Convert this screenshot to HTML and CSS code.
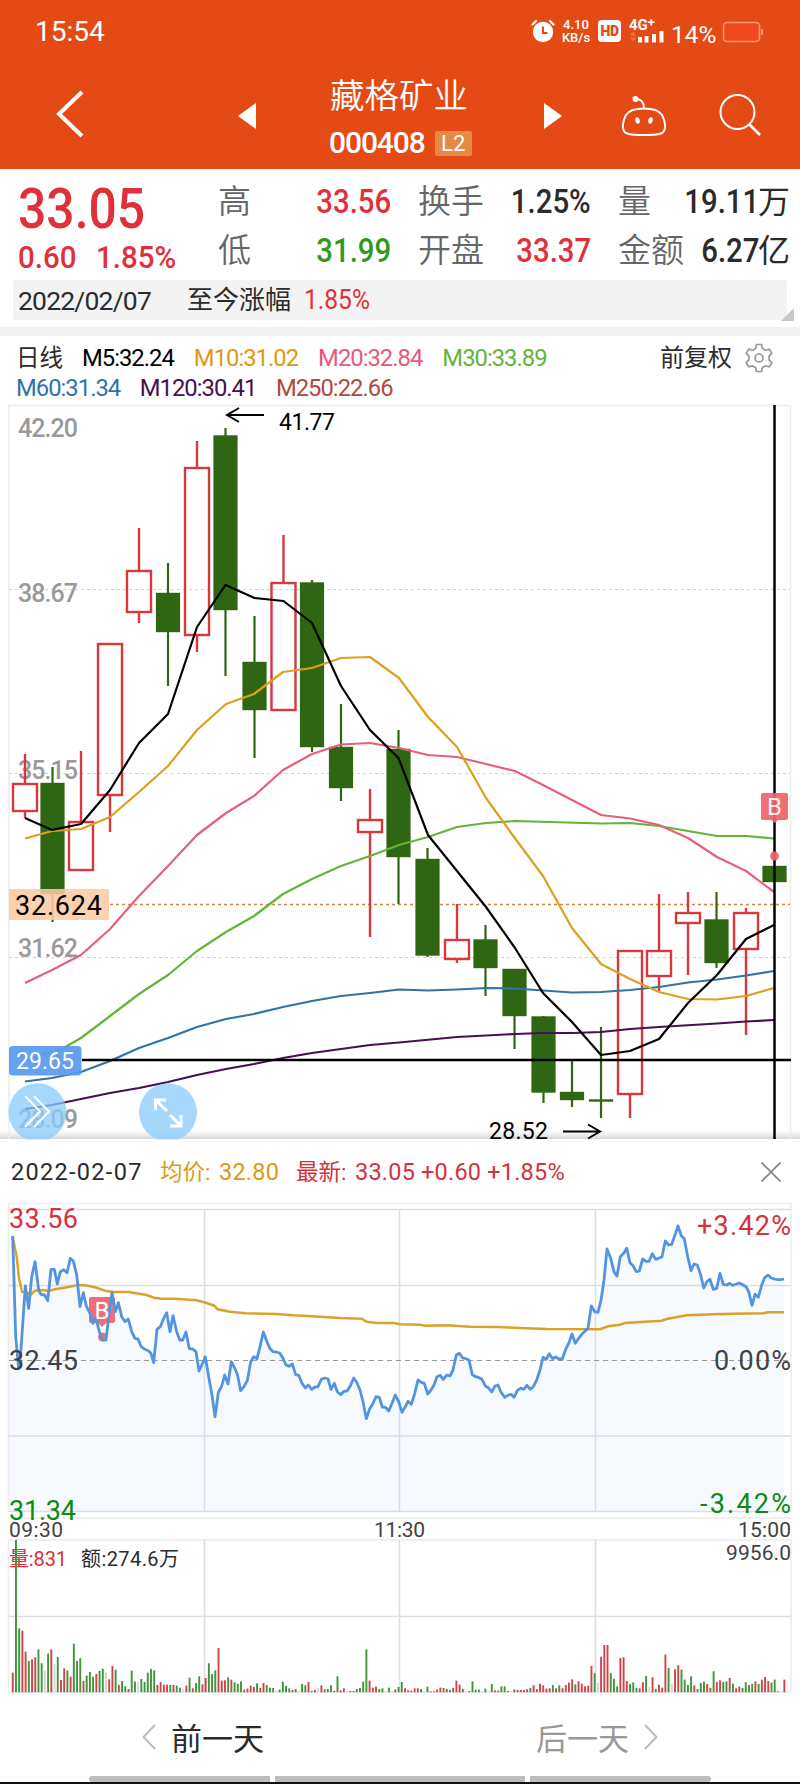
FILE: index.html
```html
<!DOCTYPE html>
<html lang="zh-CN">
<head>
    <meta charset="UTF-8">
    <meta name="viewport" content="width=device-width, initial-scale=1.0">
    <title>藏格矿业 000408</title>
    <link rel="stylesheet" href="styles.css">
</head>
<body>
    <header class="header">
        <div class="status-bar">
            <span class="clock">15:54</span>
            <div class="status-icons">
                <svg class="alarm" width="24" height="24" viewBox="0 0 24 24">
                    <circle cx="12" cy="13" r="10.2" fill="#fff"/>
                    <path d="M1.5 5.5L5 2M22.500 5.500L19 2" stroke="#fff" stroke-width="2.200" stroke-linecap="round"/>
                    <path d="M12 7.500V14H16.500" fill="none" stroke="#e44b14" stroke-width="2"/>
                </svg>
                <div class="speed"><span>4.10</span><span>KB/s</span></div>
                <span class="hd">HD</span>
                <div class="signal">
                    <span>4G<sup>+</sup></span>
                    <svg width="36" height="13" viewBox="0 0 36 13">
                        <path d="M1 5.500L4 1.500L7 5.500zM1 7.500L4 11.500L7 7.500z" fill="#f3703c"/>
                        <path d="M9 7h4v5.500h-4zM15.500 6h4v6.500h-4zM23 4h4v8.500h-4zM30.500 1h4v11.500h-4z" fill="#fff"/>
                    </svg>
                </div>
                <span class="percent">14%</span>
                <svg class="battery" width="42" height="22" viewBox="0 0 42 22">
                    <rect x="1.500" y="1.500" width="36" height="19" rx="3.500" fill="#f04a1c" stroke="#f79a70" stroke-width="1.600"/>
                    <path d="M40 8v6" stroke="#f79a70" stroke-width="2"/>
                </svg>
            </div>
        </div>
        <div class="nav-bar">
            <svg class="back" width="30" height="50" viewBox="0 0 30 50"><path d="M27 3L4 25L27 47" fill="none" stroke="#fff" stroke-width="4"/></svg>
            <svg class="prev" width="18" height="26" viewBox="0 0 18 26"><path d="M18 0V26L0 13z" fill="#fff"/></svg>
            <div class="title">
                <span class="name">藏格矿业</span>
                <div class="code"><span>000408</span><span class="level">L2</span></div>
            </div>
            <svg class="next" width="18" height="26" viewBox="0 0 18 26"><path d="M0 0V26L18 13z" fill="#fff"/></svg>
            <svg class="robot" width="48" height="44" viewBox="0 0 48 44">
                <circle cx="15.500" cy="5" r="3" fill="#fff"/>
                <path d="M16 5C21 5 24 8 24 14.500M24 14.500C33 14.500 39 16 42 21C45 27 46 32 44.500 36C43.500 40 38 41 24 41S4.500 40 3.500 36C2 32 3 27 6 21C9 16 15 14.500 24 14.500z" fill="none" stroke="#fff" stroke-width="2"/>
                <ellipse cx="17.500" cy="26.500" rx="2.200" ry="3.300" transform="rotate(-12 17.500 26.500)" fill="#fff"/>
                <ellipse cx="30.500" cy="26.500" rx="2.200" ry="3.300" transform="rotate(12 30.500 26.500)" fill="#fff"/>
            </svg>
            <svg class="search" width="44" height="44" viewBox="0 0 44 44">
                <circle cx="19.500" cy="19" r="17" fill="none" stroke="#fff" stroke-width="2"/>
                <path d="M31 31L42 42" stroke="#fff" stroke-width="2.600"/>
            </svg>
        </div>
    </header>

    <section class="quote">
        <div class="price-box">
            <div class="price din">33.05</div>
            <div class="change"><span class="din amount">0.60</span><span class="din">1.85%</span></div>
        </div>
        <div class="stats">
            <div class="stat"><label>高</label><b class="din red">33.56</b></div>
            <div class="stat"><label>换手</label><b class="din">1.25%</b></div>
            <div class="stat"><label>量</label><span class="value"><b class="din">19.11</b>万</span></div>
            <div class="stat"><label>低</label><b class="din green">31.99</b></div>
            <div class="stat"><label>开盘</label><b class="din red">33.37</b></div>
            <div class="stat"><label>金额</label><span class="value"><b class="din">6.27</b>亿</span></div>
        </div>
    </section>

    <div class="date-bar">
        <span class="date">2022/02/07</span>
        <span class="since">至今涨幅</span>
        <span class="din since-value">1.85%</span>
        <i class="corner"></i>
    </div>
    <div class="divider"></div>

    <section class="legend">
        <div class="legend-row">
            <span class="period">日线</span>
            <span class="ma5">M5:32.24</span>
            <span class="ma10">M10:31.02</span>
            <span class="ma20">M20:32.84</span>
            <span class="ma30">M30:33.89</span>
            <span class="adjust">前复权</span>
            <svg width="30" height="30" viewBox="0 0 30 30" fill="none" stroke="#999" stroke-width="1.700" stroke-linejoin="round">
                <path d="M12.500 1.500h5l1 4 3 1.700 3.800-1.100 2.500 4.200-2.700 2.900v3.600l2.700 2.900-2.500 4.200-3.800-1.100-3 1.700-1 4h-5l-1-4-3-1.700-3.800 1.100-2.500-4.200 2.700-2.900v-3.600l-2.700-2.900 2.500-4.200 3.800 1.100 3-1.700z"/>
                <circle cx="15" cy="15" r="4"/>
            </svg>
        </div>
        <div class="legend-row second">
            <span class="ma60">M60:31.34</span>
            <span class="ma120">M120:30.41</span>
            <span class="ma250">M250:22.66</span>
        </div>
    </section>

    <!-- daily candles -->
    <svg class="kline" width="800" height="737" viewBox="0 403 800 737">
        <defs>
            <linearGradient id="fade" x1="0" y1="0" x2="0" y2="1">
                <stop offset="0" stop-color="#fff" stop-opacity="0"/>
                <stop offset="1" stop-color="#d4d4d4"/>
            </linearGradient>
        </defs>
        <rect x="0" y="1127" width="800" height="12" fill="url(#fade)"/>
        <path class="frame" d="M9 1139V405.500H790.500V1139"/>
        <path class="dash" d="M9 589.500H790M9 773.500H790M9 957.500H790"/>
        <g class="axis">
            <text x="18" y="437" textLength="60">42.20</text>
            <text x="18" y="602" textLength="60">38.67</text>
            <text x="18" y="779" textLength="60">35.15</text>
            <text x="18" y="957" textLength="60">31.62</text>
            <text x="18" y="1128" textLength="60">28.09</text>
        </g>
        <path class="dash-orange" d="M110 904.500H790"/>
        <g id="candles"></g>
        <g id="averages"></g>
        <path d="M82 1060H791M774.500 405V1139" stroke="#000" stroke-width="2.500"/>
        <path d="M264 415H227M239 408L227 415L239 422M563 1131.500H600M588 1124.500L600 1131.500L588 1138.500" fill="none" stroke="#000" stroke-width="2"/>
        <text class="note" x="279" y="429.500" textLength="56">41.77</text>
        <text class="note" x="489" y="1139" textLength="59">28.52</text>
        <rect x="9" y="889" width="100" height="31" fill="#fccba4" fill-opacity=".88"/>
        <text class="cost" x="15" y="914.500" textLength="87">32.624</text>
        <rect x="9" y="1046" width="72.500" height="29.500" rx="4" fill="#5a9aee" fill-opacity=".93"/>
        <text class="cursor-price" x="16" y="1069" textLength="58">29.65</text>
        <g class="round-btn">
            <path d="M27.500 1139.500A29 29 0 1 1 47.500 1139.500zM158 1139.500A29 29 0 1 1 178 1139.500z"/>
            <path class="glyph" d="M25 1096L40 1111.500L25 1127M34 1096L49 1111.500L34 1127"/>
            <path class="glyph bold" d="M167 1111L155.500 1100M155.500 1110V1100H166M170 1115L181 1126M181 1115V1126H170"/>
        </g>
        <g class="buy">
            <path d="M763 793h23q2 0 2 2v23q0 2-2 2h-8l-3.500 3-3.500-3h-8q-2 0-2-2v-23q0-2 2-2z"/>
            <circle cx="774.500" cy="856" r="4.500"/>
            <text x="774.500" y="815">B</text>
        </g>
    </svg>

    <section class="day-head">
        <span class="day">2022-02-07</span>
        <span class="avg">均价: <em>32.80</em></span>
        <span class="last">最新: <em>33.05 +0.60 +1.85%</em></span>
        <svg width="20" height="20" viewBox="0 0 20 20"><path d="M.5 .5L19.500 19.500M19.500 .5L.5 19.500" stroke="#888" stroke-width="1.800"/></svg>
    </section>

    <!-- intraday line and volume -->
    <svg class="minute" width="800" height="492" viewBox="0 1203 800 492">
        <path id="area" fill="#f6f9fe"/>
        <path class="frame" d="M8.500 1512V1203.500H791V1512M8.500 1518H791M8.500 1540H791V1692H8.500z"/>
        <path class="grid" d="M8.500 1209.500H791M8.500 1285.500H791M8.500 1436H791M8.500 1511.500H791M8.500 1616.500H791M204.500 1209V1511.500M399.500 1209V1511.500M595.500 1209V1511.500M204.500 1540V1692M399.500 1540V1692M595.500 1540V1692"/>
        <path class="dash-dark" d="M9 1360.500H790"/>
        <path id="avgLine" class="avg-line"/>
        <g class="buy">
            <path d="M91 1297h22q2 0 2 2v22q0 2-2 2h-7l-4 4-4-4h-7q-2 0-2-2v-22q0-2 2-2z"/>
            <circle cx="102.500" cy="1337" r="4.500"/>
        </g>
        <path id="priceLine" class="price-line"/>
        <text class="buy-letter" x="102" y="1318.500">B</text>
        <g class="scale">
            <text class="red" x="9" y="1228" textLength="69">33.56</text>
            <text x="9" y="1370" textLength="69">32.45</text>
            <text class="deep" x="9" y="1519.500" textLength="67">31.34</text>
            <text class="red" x="697" y="1235" textLength="94">+3.42%</text>
            <text x="714" y="1370" textLength="77">0.00%</text>
            <text class="deep" x="700" y="1513" textLength="91">-3.42%</text>
        </g>
        <g class="time">
            <text x="9" y="1537" textLength="54">09:30</text>
            <text x="374" y="1537" textLength="51">11:30</text>
            <text x="738" y="1537" textLength="53">15:00</text>
            <text x="726" y="1559.500" textLength="65">9956.0</text>
        </g>
        <g class="volume-label">
            <text class="red" x="9" y="1565.500" textLength="58">量:831</text>
            <text x="81" y="1565.500" textLength="98">额:274.6万</text>
        </g>
        <g id="volume"></g>
    </svg>

    <nav class="pager">
        <div class="page-btn">
            <svg width="14" height="26" viewBox="0 0 14 26"><path d="M13 1L1.500 13L13 25" fill="none" stroke="#bbb" stroke-width="2"/></svg>
            <span>前一天</span>
        </div>
        <div class="page-btn off">
            <span>后一天</span>
            <svg width="14" height="26" viewBox="0 0 14 26"><path d="M1 1L12.500 13L1 25" fill="none" stroke="#bbb" stroke-width="2"/></svg>
        </div>
    </nav>
    <div class="gesture"><i></i><i></i><i></i></div>

    <script src="chart.js"></script>
</body>
</html>
```

FILE: styles.css
```css
body {
    margin: 0;
    width: 800px;
    height: 1784px;
    overflow: hidden;
    background-color: #fff;
    color: #2b2b2b;
    font-family: Roboto, "Noto Sans CJK SC", sans-serif;
}
svg {
    display: block;
    flex-shrink: 0;
}
.red {
    color: #e0313a;
    fill: #d8303c;
}
.green {
    color: #2f9a1c;
}
.din {
    display: inline-block;
    font-weight: 500;
    transform: scaleX(0.89);
    transform-origin: left center;
}

/* header */
.header {
    height: 169px;
    background-color: #e44b14;
    color: #fff;
}
.status-bar {
    height: 62px;
    display: flex;
    justify-content: space-between;
    padding: 0 36px 0 35px;
}
.clock {
    font-size: 28px;
    line-height: 63px;
}
.status-icons {
    display: flex;
    align-items: flex-start;
}
.alarm {
    margin-top: 19px;
}
.speed {
    display: flex;
    flex-direction: column;
    width: 30px;
    margin: 19px 0 0 6px;
    font-size: 13px;
    font-weight: 500;
    line-height: 12.500px;
    text-align: center;
}
.hd {
    width: 23px;
    height: 22px;
    margin: 20px 0 0 7px;
    border-radius: 4px;
    background-color: #fff;
    color: #e44b14;
    font-size: 14px;
    font-weight: 900;
    line-height: 23px;
    text-align: center;
    letter-spacing: -0.5px;
}
.signal {
    width: 36px;
    margin: 19px 0 0 8px;
    font-size: 15px;
    font-weight: 700;
    line-height: 13px;
    white-space: nowrap;
}
.signal span {
    display: block;
    height: 11px;
}
.signal sup {
    font-size: 13px;
    line-height: 0;
    vertical-align: 3px;
}
.percent {
    margin-left: 6px;
    font-size: 24.5px;
    line-height: 69px;
    width: 46px;
}
.battery {
    margin: 21px 0 0 5px;
}
.nav-bar {
    display: flex;
    align-items: flex-start;
    height: 107px;
}
.back {
    margin: 27px 0 0 55px;
}
.prev {
    margin: 41px 0 0 153px;
}
.title {
    display: flex;
    flex-direction: column;
    width: 146px;
    margin: 15px 0 0 73px;
    white-space: nowrap;
}
.name {
    font-size: 34.5px;
    line-height: 39px;
    font-weight: 350;
    padding-left: 1px;
}
.code {
    display: flex;
    align-items: center;
    margin-top: 13px;
    font-size: 30px;
    font-weight: 500;
    letter-spacing: -1.1px;
    line-height: 28px;
}
.level {
    width: 37px;
    height: 25px;
    margin-left: 10px;
    border-radius: 2px;
    background-color: #e58a44;
    font-size: 22px;
    font-weight: 400;
    line-height: 26px;
    text-align: center;
    letter-spacing: 0;
}
.next {
    margin: 41px 0 0 69px;
}
.robot {
    margin: 32px 0 0 58px;
}
.search {
    margin: 31px 0 0 50px;
}

/* quote */
.quote {
    display: flex;
    height: 111px;
}
.price-box {
    width: 200px;
    margin-left: 18px;
    padding-top: 15px;
    color: #e0313a;
}
.price {
    display: block;
    font-size: 56px;
    line-height: 51px;
}
.change {
    display: flex;
    font-size: 32px;
    line-height: 45px;
}
.change .din {
    transform: scaleX(0.92);
}
.amount {
    width: 78px;
}
.stats {
    display: grid;
    grid-template-columns: 172px 172px 171px;
    grid-auto-rows: 49px;
    column-gap: 28px;
    padding-top: 8px;
}
.stat {
    display: flex;
    justify-content: space-between;
    align-items: center;
    white-space: nowrap;
    font-size: 33px;
    line-height: 49px;
}
.stat label {
    color: #666;
    font-weight: 350;
}
.stat .din {
    transform-origin: right center;
    margin-right: -1px;
}
.stat .value {
    font-weight: 400;
    font-size: 32px;
    margin-right: -1px;
}
.value .din {
    font-size: 33px;
}

.date-bar {
    position: relative;
    display: flex;
    align-items: center;
    height: 40px;
    margin: 0 13px;
    border-radius: 3px;
    background-color: #f3f3f3;
    white-space: nowrap;
    line-height: 39px;
}
.date {
    width: 169px;
    padding-left: 5px;
    font-size: 26.5px;
    letter-spacing: -0.8px;
}
.since {
    width: 117px;
    font-size: 26px;
}
.since-value {
    color: #e0313a;
    font-size: 27px;
    font-weight: 400;
    transform: scaleX(0.91);
}
.corner {
    position: absolute;
    right: -7px;
    bottom: -1px;
    border-left: 13px solid transparent;
    border-bottom: 13px solid #c8c8c8;
}
.divider {
    height: 9px;
    margin-top: 7px;
    background-color: #f3f3f3;
}

/* moving averages */
.legend {
    height: 60px;
    padding: 7px 0 0 16px;
}
.legend-row {
    display: flex;
    align-items: center;
    gap: 20px;
    height: 30px;
    padding-right: 26px;
    white-space: nowrap;
    font-size: 23.8px;
    line-height: 30px;
    letter-spacing: -0.98px;
}
.second {
    gap: 19.5px;
}
.period {
    font-size: 23.5px;
    letter-spacing: 0;
    margin-right: -1px;
}
.ma5 { color: #000; }
.ma10 { color: #dc9a12; }
.ma20 { color: #e9587a; }
.ma30 { color: #62b53a; }
.ma60 { color: #2f74a8; }
.ma120 { color: #47104f; }
.ma250 { color: #b04a40; }
.adjust {
    margin-left: auto;
    margin-right: -8px;
    font-size: 24px;
    letter-spacing: 0;
}

/* charts */
.frame {
    fill: none;
    stroke: #ececec;
    stroke-width: 1.5;
}
.grid {
    fill: none;
    stroke: #dadde1;
    stroke-width: 1.5;
}
.dash,
.dash-orange,
.dash-dark {
    stroke: #d2d2d2;
    stroke-width: 1.2;
    stroke-dasharray: 3 3;
}
.dash-orange {
    stroke: #d58238;
    stroke-width: 1.5;
}
.dash-dark {
    stroke: #999;
    stroke-dasharray: 5 4;
}
.axis {
    font-size: 25px;
    font-weight: 500;
    fill: #999;
}
.note {
    font-size: 23px;
    fill: #000;
}
.cost {
    font-size: 27px;
    fill: #000;
}
.cursor-price {
    font-size: 23px;
    fill: #fff;
}
.round-btn {
    fill: #8accfd;
    fill-opacity: 0.76;
}
.glyph {
    fill: none;
    stroke: #fff;
    stroke-width: 2;
}
.bold {
    stroke-width: 3;
}
.buy {
    fill: #ee646a;
    fill-opacity: 0.93;
}
.buy text,
.buy-letter {
    fill: #fff;
    font-size: 24px;
    text-anchor: middle;
}
.up {
    fill: none;
    stroke: #d8373c;
    stroke-width: 2.4;
}
.down {
    fill: #2f6613;
    stroke: #2f6613;
    stroke-width: 2.2;
}
.line {
    fill: none;
    stroke-width: 2.2;
    stroke-linejoin: round;
}
.price-line {
    fill: none;
    stroke: #5294e2;
    stroke-width: 2.8;
    stroke-linejoin: round;
}
.avg-line {
    fill: none;
    stroke: #dda02a;
    stroke-width: 2.5;
}
.scale {
    font-size: 27px;
    fill: #3f4245;
}
.deep {
    fill: #0b8a12;
}
.time {
    font-size: 21px;
    fill: #3f4245;
}
.volume-label {
    font-size: 20px;
    fill: #2b2b2b;
}

.day-head {
    display: flex;
    align-items: center;
    height: 63px;
    padding: 2px 19px 0 11px;
    box-sizing: border-box;
    font-size: 23.5px;
    line-height: 61px;
    white-space: nowrap;
}
.day {
    width: 149px;
    letter-spacing: 1.3px;
}
.avg {
    width: 136px;
    color: #dc9a12;
    font-size: 22.5px;
}
.last {
    color: #d3323e;
    font-size: 22.5px;
}
.day-head em {
    margin-left: 3px;
    font-style: normal;
    font-size: 23.5px;
    letter-spacing: 0.2px;
}
.day-head svg {
    margin-left: auto;
    margin-top: -1px;
}

/* bottom */
.pager {
    display: flex;
    height: 81px;
    font-size: 31px;
    white-space: nowrap;
}
.page-btn {
    display: flex;
    align-items: center;
    gap: 15px;
    box-sizing: border-box;
    width: 400px;
    height: 81px;
    padding: 2px 0 0 142px;
}
.page-btn svg {
    margin-top: 1px;
}
.off {
    padding-left: 136px;
    color: #999;
}
.gesture {
    display: flex;
    gap: 5px;
    height: 6px;
    padding-left: 89px;
    border-bottom: 2px solid #111;
}
.gesture i {
    width: 181px;
    background-color: #bdbdbd;
    border-radius: 3px 0 0 3px;
}
.gesture i:nth-child(2) {
    width: 250px;
    border-radius: 0;
}
.gesture i:nth-child(3) {
    border-radius: 0 3px 3px 0;
}
```

FILE: chart.js
```js
const NS = 'http://www.w3.org/2000/svg';

function add(parent, tag, attrs) {
    const el = document.createElementNS(NS, tag);
    for (const key in attrs) el.setAttribute(key, attrs[key]);
    parent.appendChild(el);
}

// [direction, center x, body top, body bottom, high, low]
const candles = [
    ['up', 25, 784, 811, 754, 818],
    ['down', 52.5, 783, 894, 767, 922],
    ['up', 81, 822, 870, 751, 870],
    ['up', 110, 644, 795, 644, 832],
    ['up', 139, 571, 612, 528, 623],
    ['down', 168, 593, 632, 563, 686],
    ['up', 197, 468, 635, 441, 652],
    ['down', 225.5, 435.5, 610, 428, 676],
    ['down', 254.5, 662, 710, 616, 758],
    ['up', 283.5, 583, 710, 535, 710],
    ['down', 312, 582.5, 747, 580, 752],
    ['down', 341, 747, 788, 704, 801],
    ['up', 370, 820, 832, 789, 937],
    ['down', 398.5, 749, 857, 730, 904],
    ['down', 427.5, 859, 955.5, 848, 957],
    ['up', 457, 940, 959, 904, 963],
    ['down', 485.5, 939.5, 968, 925, 996],
    ['down', 514.5, 969, 1016, 969, 1049],
    ['down', 543.5, 1016.5, 1092.5, 1016, 1103],
    ['down', 572, 1092, 1100, 1061, 1107],
    ['down', 601, 1099.5, 1101.5, 1027, 1118],
    ['up', 630, 951, 1094, 951, 1118],
    ['up', 659, 951, 976, 894, 991],
    ['up', 688, 913, 923, 892, 975],
    ['down', 716.5, 919.5, 963, 892, 968],
    ['up', 746, 913, 949, 908, 1035],
    ['down', 774.5, 866, 882, 866, 882]
];

const candleLayer = document.getElementById('candles');
candles.forEach(([type, x, top, bottom, high, low]) => {
    if (type === 'up') {
        add(candleLayer, 'rect', { class: type, x: x - 12, y: top, width: 24, height: bottom - top });
        add(candleLayer, 'path', { class: type, d: `M${x} ${high}V${top}M${x} ${bottom}V${low}` });
    } else {
        add(candleLayer, 'rect', { class: type, x: x - 11, y: top + 0.9, width: 22, height: Math.max(bottom - top - 1.8, 0.2) });
        add(candleLayer, 'path', { class: type, d: `M${x} ${high}V${low}` });
    }
});

const averages = [
    ['#47104f', '25,1109 52,1105 81,1099 110,1093 139,1088 168,1082 197,1075 226,1069 254,1064 283,1058 312,1053 341,1049 370,1045 399,1042.5 457,1037 515,1034 543,1033 572,1033 601,1032 630,1029 659,1027 717,1023.5 746,1021.5 774,1020'],
    ['#2f74a8', '25,1081.5 52,1078 81,1072 110,1061 139,1048 168,1038 197,1027 226,1019 254,1014 283,1007 312,1001 341,996 370,993 399,989.5 428,990.5 457,989.5 486,988 515,988.5 543,990.5 572,992.5 601,992 630,990 659,987 688,982.5 717,979.5 746,975.5 774,971'],
    ['#62b53a', '25,1061 42,1055 60,1050 81,1038 110,1016 139,994 168,975 197,951 226,932 254,916 283,894 312,879 341,866 370,856 399,845 428,837 457,827 486,823 515,821 601,823.5 630,823 659,826 688,831 717,836 746,836 774,838.5'],
    ['#e5607a', '25,983 52,970 81,955 110,929 139,896 168,866 197,835 226,813 254,796 283,770 312,754 341,744.5 370,743 399,748 428,755 457,757 486,764 515,771 543,785 572,800 601,815 630,818.5 659,825 688,838 717,857 746,871 774,892'],
    ['#dd9f1e', '25,838.5 52,831 81,829 110,817 139,792 168,766 197,730 226,704 254,694 283,672 312,668 341,658 370,657 399,678 428,717 457,747 486,798 514,837 543,876 572,928 601,964 630,979 659,992 688,999 717,999.5 746,996 774,988'],
    ['#000', '25,818 52,830 81,824 110,790 139,743 168,714 197,627 225.5,585 254.5,598 283.5,601 312,623 341,686 370,730 398.5,758 428,835 457,871 486,907 515,948 543,993 572,1022 601,1055 630,1051 659,1039 688,1003 717,975 746,939 774,925']
];
averages.forEach(([stroke, points]) => {
    add(document.getElementById('averages'), 'polyline', { class: 'line', stroke, points });
});

// intraday points are stored in thirds of a pixel, measured from TOP
const TOP = 1150;
const price = '38,258 47,560 56,655 62,610 76,408 86,475 95,380 105,335 116,420 123,433 134,435 143,452 153,358 163,358 172,402 181,365 191,359 201,368 211,325 220,333 230,375 240,470 250,428 259,468 269,488 279,520 288,505 298,545 308,570 318,570 327,490 336,428 346,485 355,458 365,500 375,515 385,507 395,545 405,565 414,567 424,590 433,597 445,602 453,610 461,638 471,538 481,530 491,505 500,488 510,545 519,497 530,545 539,570 548,570 558,546 568,596 578,597 588,605 597,663 607,642 616,620 626,680 636,735 645,800 655,728 665,708 674,675 684,702 694,635 703,652 712,672 722,722 732,710 742,692 752,635 761,620 771,626 780,590 790,546 799,570 809,595 819,605 829,606 839,609 849,625 858,645 867,649 877,642 887,674 896,676 906,700 916,714 925,705 935,718 945,711 954,710 964,688 974,684 984,687 993,718 1003,700 1012,725 1022,734 1031,724 1041,723 1051,708 1061,684 1070,697 1080,720 1089,755 1099,806 1109,776 1118,762 1128,740 1138,742 1147,771 1157,772 1166,783 1176,760 1186,735 1196,755 1206,787 1215,772 1224,754 1234,763 1243,735 1254,690 1264,697 1273,700 1283,732 1293,720 1302,705 1311,680 1321,676 1330,688 1340,675 1350,678 1359,660 1369,615 1378,610 1388,624 1398,626 1407,630 1417,674 1427,680 1437,683 1446,688 1456,708 1466,714 1475,726 1485,708 1494,705 1504,728 1514,742 1523,736 1533,733 1542,742 1552,722 1562,714 1571,718 1581,706 1591,718 1600,710 1610,690 1620,660 1629,622 1639,628 1648,611 1658,626 1667,621 1677,627 1687,627 1697,598 1707,578 1716,552 1726,580 1736,565 1745,553 1764,535 1774,468 1784,485 1794,487 1803,450 1812,390 1821,297 1832,325 1842,365 1851,378 1861,320 1871,310 1880,295 1890,338 1899,347 1909,365 1918,363 1928,327 1938,334 1947,334 1957,311 1967,328 1976,325 1986,320 1996,273 2006,285 2015,283 2025,255 2034,228 2044,257 2053,266 2063,320 2073,362 2082,342 2092,345 2102,375 2111,414 2121,394 2130,388 2140,418 2150,415 2160,370 2170,403 2180,405 2189,400 2198,406 2218,399 2230,405 2238,410 2246,425 2256,466 2265,433 2275,442 2285,405 2294,383 2304,375 2313,383 2323,387 2333,389 2343,389 2352,387';
const average = '38,262 50,320 57,385 66,425 78,427 92,434 105,422 130,420 145,423 165,418 200,412 235,405 255,406 285,412 315,422 340,426 385,426 440,435 462,443 485,446 525,446 590,451 620,459 643,467 653,478 690,485 735,490 830,492 880,496 960,500 1020,504 1085,506 1100,515 1130,519 1180,519 1200,523 1260,524 1275,527 1340,526 1410,530 1490,531 1580,535 1640,537 1800,538 1825,529 1860,524 1875,519 1985,512 2000,507 2060,496 2100,494 2140,493 2200,491 2290,490 2305,487 2352,487';

function toPath(data) {
    return 'M' + data.split(' ').map(p => {
        const [x, y] = p.split(',');
        return (x / 3).toFixed(1) + ' ' + (TOP + y / 3).toFixed(1);
    }).join('L');
}
document.getElementById('priceLine').setAttribute('d', toPath(price));
document.getElementById('avgLine').setAttribute('d', toPath(average));
document.getElementById('area').setAttribute('d', toPath(price) + 'L784 1511L9 1511L9 1236z');

// one bar per minute: r = up, g = down, n = flat
const volume = 'r59 g457 g192 r185 r122 g94 r99 r105 g129 g87 n65 g116 r129 n84 g106 r37 r72 g66 r47 g146 g94 g102 r34 g50 g61 g47 r55 g64 g71 n60 r39 r79 g68 r22 g34 g18 r10 g65 g32 n32 g40 g31 g59 g70 g66 r22 r31 r23 r23 g22 r22 g20 g14 n10 r20 g44 r12 g28 g48 r24 r43 g87 g55 g66 r133 r35 r36 g45 r38 g30 g25 g33 r8 r11 r20 r16 g27 r13 r28 g22 g14 g13 n6 g8 g32 g19 g12 r7 g10 n5 g25 g21 r31 r4 r7 n13 r21 r9 g10 g21 r4 g48 r6 r12 n3 r4 r4 g10 g13 g32 g129 r35 r14 r17 g10 g12 n3 g14 n4 r9 g16 g31 r12 r6 r5 r12 r12 g10 n2 g17 r3 r3 r8 r14 g13 r10 g7 r13 r35 r23 g10 n3 g4 g33 g8 g8 n3 g11 n3 g25 r6 r5 g18 g18 r4 n3 g9 r7 r7 r7 r9 g13 r21 r10 r26 r21 r11 r12 g22 r12 g21 r12 r22 r29 r39 g24 r33 r26 r18 r20 r79 g57 n28 r107 r142 r142 g58 g40 g18 r103 r105 r34 g25 g30 g13 r12 r30 g49 n16 r45 g10 r23 r14 r113 g73 n25 r69 r81 g68 g38 g22 g48 r21 g10 g28 g32 r25 r13 g63 r31 r36 g31 g33 r43 g26 r12 r17 g13 g30 g22 g25 r33 g25 r38 r46 r34 g29 g38 g3 n0 r38';
const colors = { r: '#cf4448', g: '#3d9639', n: '#d5d5d5' };
volume.split(' ').forEach((v, i) => {
    const h = v.slice(1) / 3;
    add(document.getElementById('volume'), 'rect', {
        x: (11.8 + i * 3.215).toFixed(2), y: 1692.3 - h, width: 1.9, height: h, fill: colors[v[0]]
    });
});
```
